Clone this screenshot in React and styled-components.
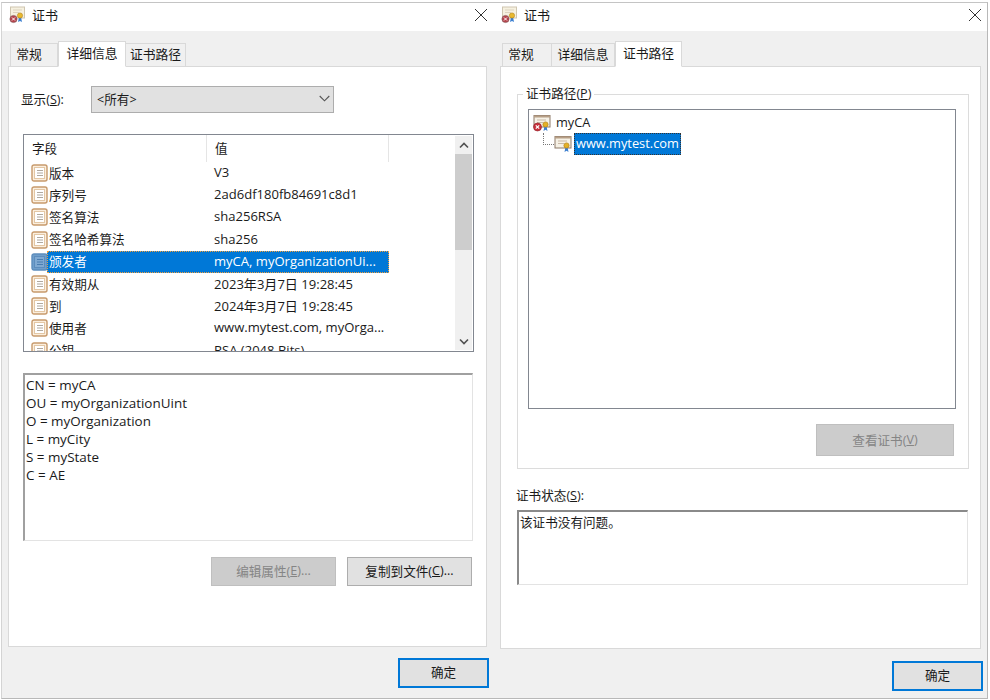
import React from 'react';
import styled, { createGlobalStyle } from 'styled-components';

const GlobalStyle = createGlobalStyle`
  html, body {
    margin: 0;
    padding: 0;
    background: #fff;
  }
  body {
    font-family: 'Open Sans', 'Noto Sans CJK SC', sans-serif;
    font-size: 12.6px;
    color: #1a1a1a;
  }
`

const FieldIcon = ({ selected }) => (
  <svg width="17" height="18" viewBox="0 0 17 18">
    <rect x="1" y="1" width="15" height="16" rx="2" fill={selected ? '#6f9ecb' : '#fbeedd'} stroke={selected ? '#5d8dbd' : '#c79a6c'} strokeWidth="1.4" />
    <rect x="3.5" y="3.5" width="10" height="11" fill={selected ? '#7fa9d2' : '#fff'} stroke={selected ? '#5d8dbd' : '#e3c7a5'} />
    <path d="M6 6.5h6M6 9h6M6 11.5h6" stroke={selected ? '#4a7db0' : '#b0a89e'} strokeWidth="1" />
  </svg>
)

const CertIcon = ({ error }) => (
  <svg width="19" height="18" viewBox="0 0 19 18">
    <rect x="1" y="1.5" width="16" height="11.5" fill="#f6f1e6" stroke="#8d7a68" />
    <path d="M1 1.5h16v2H1z" fill="#b79f86" />
    <path d="M4 6h9M4 8.5h6" stroke="#c9b9a6" />
    <path d="M11.5 12l-1 5 2-1.2 2 1.2-1-5z" fill="#3b7fd0" />
    <circle cx="12.5" cy="10.5" r="2.6" fill="#e3b128" stroke="#b5831a" strokeWidth=".7" />
    {error && (
      <>
        <circle cx="4.5" cy="13" r="4" fill="#c8323c" stroke="#8f1f28" strokeWidth=".6" />
        <path d="M2.8 11.3l3.4 3.4M6.2 11.3l-3.4 3.4" stroke="#fff" strokeWidth="1.2" />
      </>
    )}
  </svg>
)

const TitleIcon = () => (
  <svg width="17" height="18" viewBox="0 0 17 18">
    <rect x="1.5" y="1" width="14" height="11" fill="#f6f1e0" stroke="#cfc6b0" />
    <path d="M4 4h9M4 6.5h6" stroke="#ddd3bf" />
    <path d="M10 11l-1 5 2-1 2 1-1-5z" fill="#3b7fd0" />
    <circle cx="11" cy="9.5" r="2.6" fill="#e8b92e" stroke="#b5831a" strokeWidth=".6" />
    <circle cx="4.5" cy="13" r="3.6" fill="#b8434c" stroke="#7e5a5c" strokeWidth=".6" />
    <path d="M3 11.5l3 3M6 11.5l-3 3" stroke="#fff" strokeWidth="1" />
  </svg>
)

const ChevronDown = () => (
  <svg width="11" height="7" viewBox="0 0 11 7">
    <path d="M.7 1l4.8 4.8L10.3 1" fill="none" stroke="#555" strokeWidth="1.1" />
  </svg>
)

const CloseGlyph = () => (
  <svg width="14" height="14" viewBox="0 0 14 14">
    <path d="M1 1l12 12M13 1L1 13" stroke="#333" strokeWidth="1" />
  </svg>
)

const fields = [
  ['版本', 'V3'],
  ['序列号', '2ad6df180fb84691c8d1'],
  ['签名算法', 'sha256RSA'],
  ['签名哈希算法', 'sha256'],
  ['颁发者', 'myCA, myOrganizationUi...', true],
  ['有效期从', '2023年3月7日 19:28:45'],
  ['到', '2024年3月7日 19:28:45'],
  ['使用者', 'www.mytest.com, myOrga...'],
  ['公钥', 'RSA (2048 Bits)'],
]

const subject = ['CN = myCA', 'OU = myOrganizationUint', 'O = myOrganization', 'L = myCity', 'S = myState', 'C = AE']

const Key = ({ children }) => <u>{children}</u>

class App extends React.PureComponent {
  render() {
    return (
      <Desktop>
        <GlobalStyle />
        <DetailWindow>
          <TitleBar $left={7}>
            <TitleIcon />
            <TitleText>证书</TitleText>
            <CloseButton $right={7}>
              <CloseGlyph />
            </CloseButton>
          </TitleBar>
          <Body $left={6}>
            <TabStrip>
              <Tab $width={48} $trim={10}>常规</Tab>
              <Tab $width={68} $active>详细信息</Tab>
              <Tab $width={60}>证书路径</Tab>
            </TabStrip>
            <Panel $width={479} $height={581}>
              <ShowRow>
                <ShowLabel>显示(<Key>S</Key>):</ShowLabel>
                <Select>
                  <span>&lt;所有&gt;</span>
                  <ChevronDown />
                </Select>
              </ShowRow>
              <ListBox>
                <ListInner>
                  <ListHeader>
                    <HeaderCell $width={183}>字段</HeaderCell>
                    <HeaderCell $width={182}>值</HeaderCell>
                  </ListHeader>
                  {fields.map(([name, value, selected]) => (
                    <Row key={name}>
                      <FieldIcon selected={selected} />
                      <RowCells $selected={selected}>
                        <NameCell>{name}</NameCell>
                        <ValueCell>{value}</ValueCell>
                      </RowCells>
                    </Row>
                  ))}
                </ListInner>
                <Scrollbar>
                  <ScrollArrow>
                    <svg width="10" height="7" viewBox="0 0 10 7"><path d="M1 5.5l4-4 4 4" fill="none" stroke="#505050" strokeWidth="1.6" /></svg>
                  </ScrollArrow>
                  <ScrollThumb />
                  <ScrollTrack />
                  <ScrollArrow>
                    <svg width="10" height="7" viewBox="0 0 10 7"><path d="M1 1.5l4 4 4-4" fill="none" stroke="#505050" strokeWidth="1.6" /></svg>
                  </ScrollArrow>
                </Scrollbar>
              </ListBox>
              <DetailBox>
                {subject.map(line => <div key={line}>{line}</div>)}
              </DetailBox>
              <ButtonRow>
                <Button $disabled $width={125}>编辑属性(<Key>E</Key>)...</Button>
                <Button $width={125}>复制到文件(<Key>C</Key>)...</Button>
              </ButtonRow>
            </Panel>
            <Footer $right={6} $top={11}>
              <OkButton>确定</OkButton>
            </Footer>
          </Body>
        </DetailWindow>

        <PathWindow>
          <TitleBar $left={6}>
            <TitleIcon />
            <TitleText>证书</TitleText>
            <CloseButton $right={5}>
              <CloseGlyph />
            </CloseButton>
          </TitleBar>
          <Body $left={5}>
            <TabStrip>
              <Tab $width={50} $trim={12}>常规</Tab>
              <Tab $width={63}>详细信息</Tab>
              <Tab $width={67} $active>证书路径</Tab>
            </TabStrip>
            <Panel $width={481} $height={583}>
              <GroupBox>
                <Legend>证书路径(<Key>P</Key>)</Legend>
                <Tree>
                  <TreeRoot>
                    <CertIcon error />
                    <span>myCA</span>
                  </TreeRoot>
                  <TreeChild>
                    <TreeLine />
                    <CertIcon />
                    <TreeSelected>www.mytest.com</TreeSelected>
                  </TreeChild>
                </Tree>
                <ViewRow>
                  <Button $disabled $width={138} $height={32}>查看证书(<Key>V</Key>)</Button>
                </ViewRow>
              </GroupBox>
              <StatusLabel>证书状态(<Key>S</Key>):</StatusLabel>
              <StatusBox>该证书没有问题。</StatusBox>
            </Panel>
            <Footer $right={4} $top={12}>
              <OkButton>确定</OkButton>
            </Footer>
          </Body>
        </PathWindow>
      </Desktop>
    );
  }
}

const Desktop = styled.div`
  display: flex;
  width: 990px;
  height: 700px;
  padding-top: 2px;
  box-sizing: border-box;
  overflow: hidden;
  background: #fff;
`

const DetailWindow = styled.section`
  box-sizing: border-box;
  width: 494px;
  height: 697px;
  margin-left: 1px;
  border-top: 1px solid #c4c4c4;
  border-left: 1px solid #d4d4d4;
  border-bottom: 1px solid #b8b8b8;
  display: flex;
  flex-direction: column;
`

const PathWindow = styled.section`
  box-sizing: border-box;
  width: 493px;
  height: 697px;
  border-top: 1px solid #c4c4c4;
  border-bottom: 1px solid #b8b8b8;
  border-right: 1px solid #b8b8b8;
  display: flex;
  flex-direction: column;
`

const TitleBar = styled.div`
  box-sizing: border-box;
  height: 28px;
  flex: none;
  display: flex;
  align-items: center;
  padding: 0 0 5px ${p => p.$left}px;
  background: #fff;
`

const TitleText = styled.span`
  margin-left: 6px;
  font-size: 13px;
`

const CloseButton = styled.div`
  margin-left: auto;
  margin-right: ${p => p.$right}px;
  width: 14px;
  height: 14px;
`

const Body = styled.div`
  flex: 1;
  background: #f0f0f0;
  padding: 10px 0 0 ${p => p.$left}px;
`

const TabStrip = styled.div`
  display: flex;
  align-items: flex-end;
  height: 26px;
  padding-left: 2px;
  margin-bottom: -1px;
  position: relative;
  z-index: 1;
`

const Tab = styled.div`
  box-sizing: border-box;
  width: ${p => p.$width}px;
  height: ${p => (p.$active ? 26 : 24)}px;
  padding-bottom: ${p => (p.$active ? 4 : 3)}px;
  padding-right: ${p => p.$trim || 0}px;
  display: flex;
  align-items: center;
  justify-content: center;
  font-size: 12.8px;
  background: ${p => (p.$active ? '#fff' : '#f0f0f0')};
  border: 1px solid #d9d9d9;
  border-bottom: ${p => (p.$active ? '1px solid #fff' : '1px solid #d9d9d9')};
  border-left: ${p => (p.$active ? '1px solid #d9d9d9' : 'none')};
  &:first-child {
    border-left: 1px solid #d9d9d9;
  }
`

const Panel = styled.div`
  box-sizing: border-box;
  width: ${p => p.$width}px;
  height: ${p => p.$height}px;
  background: #fff;
  border: 1px solid #d9d9d9;
  position: relative;
  padding: 1px;
`

const ShowRow = styled.div`
  display: flex;
  align-items: center;
  padding: 18px 0 0 11px;
`

const ShowLabel = styled.div`
  width: 70px;
  padding-bottom: 2px;
`

const Select = styled.div`
  box-sizing: border-box;
  width: 243px;
  height: 27px;
  background: #e1e1e1;
  border: 1px solid #adadad;
  display: flex;
  align-items: center;
  justify-content: space-between;
  padding: 0 3px 2px 5px;
`

const ListBox = styled.div`
  box-sizing: border-box;
  display: flex;
  width: 451px;
  height: 218px;
  margin: 21px 0 0 13px;
  border: 1px solid #828790;
  overflow: hidden;
`

const ListInner = styled.div`
  width: 431px;
  overflow: hidden;
`

const ListHeader = styled.div`
  display: flex;
  height: 27px;
`

const HeaderCell = styled.div`
  box-sizing: border-box;
  width: ${p => p.$width}px;
  padding: 0 0 2px 8px;
  display: flex;
  align-items: center;
  border-right: 1px solid #e5e5e5;
`

const Row = styled.div`
  display: flex;
  align-items: center;
  height: 22.2px;
  padding-left: 7px;
  white-space: nowrap;
`

const RowCells = styled.div`
  box-sizing: border-box;
  display: flex;
  align-items: center;
  width: 342px;
  height: 22px;
  margin-left: -1px;
  padding: 0 0 2px 2px;
  background: ${p => (p.$selected ? '#0078d7' : 'transparent')};
  color: ${p => (p.$selected ? '#fff' : 'inherit')};
  outline: ${p => (p.$selected ? '1px dotted #f2a03c' : 'none')};
  outline-offset: -1px;
`

const NameCell = styled.span`
  width: 165px;
  flex: none;
`

const ValueCell = styled.span`
  font-size: 13.05px;
`

const Scrollbar = styled.div`
  width: 17px;
  margin: 1px 1px 1px 0;
  background: #f0f0f0;
  display: flex;
  flex-direction: column;
`

const ScrollArrow = styled.div`
  height: 18px;
  flex: none;
  display: flex;
  align-items: center;
  justify-content: center;
`

const ScrollThumb = styled.div`
  height: 96px;
  flex: none;
  background: #cdcdcd;
`

const ScrollTrack = styled.div`
  flex: 1;
`

const DetailBox = styled.div`
  box-sizing: border-box;
  width: 450px;
  height: 168px;
  margin: 21px 0 0 13px;
  padding: 1px 1px;
  font-size: 13.45px;
  line-height: 18px;
  border-top: 2px solid #a0a0a0;
  border-left: 2px solid #a0a0a0;
  border-right: 1px solid #e3e3e3;
  border-bottom: 1px solid #e3e3e3;
`

const ButtonRow = styled.div`
  display: flex;
  justify-content: flex-end;
  gap: 11px;
  width: 462px;
  margin-top: 16px;
`

const Button = styled.div`
  box-sizing: border-box;
  width: ${p => p.$width}px;
  height: ${p => p.$height || 29}px;
  padding-bottom: 2px;
  display: flex;
  align-items: center;
  justify-content: center;
  background: ${p => (p.$disabled ? '#cccccc' : '#e1e1e1')};
  border: 1px solid ${p => (p.$disabled ? '#bfbfbf' : '#adadad')};
  color: ${p => (p.$disabled ? '#858585' : 'inherit')};
`

const Footer = styled.div`
  display: flex;
  justify-content: flex-end;
  padding-top: ${p => p.$top}px;
  padding-right: ${p => p.$right}px;
`

const OkButton = styled.div`
  box-sizing: border-box;
  width: 91px;
  height: 30px;
  padding-bottom: 3px;
  display: flex;
  align-items: center;
  justify-content: center;
  background: #e1e1e1;
  border: 2px solid #0078d7;
`

const GroupBox = styled.div`
  box-sizing: border-box;
  position: relative;
  width: 452px;
  height: 375px;
  margin: 26px 0 0 15px;
  border: 1px solid #dcdcdc;
  padding: 14px 12px 0 10px;
`

const Legend = styled.div`
  position: absolute;
  top: -9px;
  left: 5px;
  padding: 0 3px;
  line-height: 16px;
  background: #fff;
`

const Tree = styled.div`
  box-sizing: border-box;
  width: 428px;
  height: 300px;
  border: 1px solid #828790;
  padding: 2px 0 0 4px;
  font-size: 12.8px;
`

const TreeRoot = styled.div`
  display: flex;
  align-items: center;
  gap: 4px;
  height: 21px;
  span {
    padding-bottom: 2px;
  }
`

const TreeChild = styled.div`
  position: relative;
  display: flex;
  align-items: center;
  gap: 1px;
  height: 22px;
  padding-left: 21px;
`

const TreeLine = styled.div`
  position: absolute;
  left: 10px;
  top: 0;
  width: 10px;
  height: 11px;
  border-left: 1px dotted #777;
  border-bottom: 1px dotted #777;
`

const TreeSelected = styled.span`
  box-sizing: border-box;
  display: flex;
  align-items: center;
  height: 22px;
  padding: 0 2px 2px;
  background: #0078d7;
  color: #fff;
  outline: 1px dotted #333;
  outline-offset: -1px;
`

const ViewRow = styled.div`
  display: flex;
  justify-content: flex-end;
  padding-right: 2px;
  margin-top: 15px;
`

const StatusLabel = styled.div`
  margin: 16px 0 0 14px;
`

const StatusBox = styled.div`
  box-sizing: border-box;
  width: 451px;
  height: 75px;
  margin: 6px 0 0 15px;
  padding: 0 1px;
  border-top: 2px solid #8a8a8a;
  border-left: 2px solid #8a8a8a;
  border-right: 1px solid #e3e3e3;
  border-bottom: 1px solid #e3e3e3;
`

export default App;
